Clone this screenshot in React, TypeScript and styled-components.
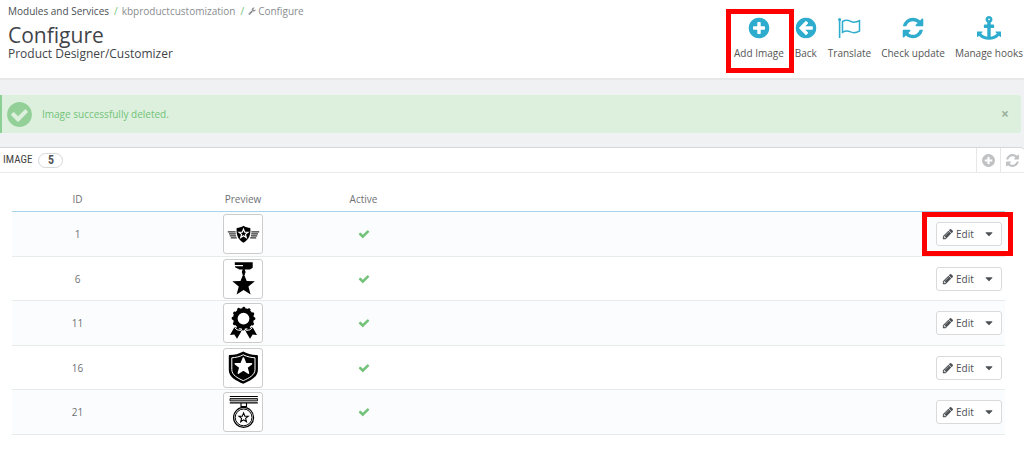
import React from "react";
import styled, { createGlobalStyle } from "styled-components";

const GlobalStyle = createGlobalStyle`
  *, *::before, *::after { box-sizing: border-box; }
  body {
    margin: 0;
    background: #eff1f2;
    color: #555;
    font: 10px/16px "Open Sans", sans-serif;
  }
  button { font: inherit; color: inherit; cursor: pointer; }
  h1, h2, p, ol { margin: 0; padding: 0; }
`;

const DISC =
  "q0 209-103 385.5t-279.5 279.5-385.5 103-385.5-103-279.5-279.5-103-385.5 103-385.5 279.5-279.5 385.5-103 385.5 103 279.5 279.5 103 385.5z";

const glyphs = {
  plusCircle:
    "M1344 960v-128q0-26-19-45t-45-19h-256v-256q0-26-19-45t-45-19h-128q-26 0-45 19t-19 45v256h-256q-26 0-45 19t-19 45v128q0 26 19 45t45 19h256v256q0 26 19 45t45 19h128q26 0 45-19t19-45v-256h256q26 0 45-19t19-45zm320-64" +
    DISC,
  checkCircle:
    "M1412 734q0-28-18-46l-91-90q-19-19-45-19t-45 19l-408 407-226-226q-19-19-45-19t-45 19l-91 90q-18 18-18 46 0 27 18 45l362 362q19 19 45 19 27 0 46-19l543-543q18-18 18-45zm252 162" +
    DISC,
  arrowCircle:
    "M1408 960v-128q0-26-19-45t-45-19h-502l189-189q19-19 19-45t-19-45l-91-91q-18-18-45-18t-45 18l-362 362-91 91q-18 18-18 45t18 45l91 91 362 362q18 18 45 18t45-18l91-91q18-18 18-45t-18-45l-189-189h502q26 0 45-19t19-45zm256-64" +
    DISC,
  refresh:
    "M1639 1056q0 5-1 7-64 268-268 434.5t-478 166.5q-146 0-282.5-55t-243.5-157l-129 129q-19 19-45 19t-45-19-19-45v-448q0-26 19-45t45-19h448q26 0 45 19t19 45-19 45l-137 137q71 66 161 102t187 36q134 0 250-65t186-179q11-17 53-117 8-23 30-23h192q13 0 22.5 9.5t9.5 22.5zm25-800v448q0 26-19 45t-45 19h-448q-26 0-45-19t-19-45 19-45l138-138q-148-137-349-137-134 0-250 65t-186 179q-11 17-53 117-8 23-30 23h-199q-13 0-22.5-9.5t-9.5-22.5v-7q65-268 270-434.5t480-166.5q146 0 284 55.5t245 156.5l130-129q19-19 45-19t45 19 19 45z",
  anchor:
    "M960 256q0-26-19-45t-45-19-45 19-19 45 19 45 45 19 45-19 19-45zm832 928v352q0 22-20 30-8 2-12 2-13 0-23-9l-93-93q-119 143-318.5 226.5t-429.5 83.5-429.5-83.5-318.5-226.5l-93 93q-9 9-23 9-4 0-12-2-20-8-20-30v-352q0-14 9-23t23-9h352q22 0 30 20 8 19-7 35l-100 100q67 91 189.5 153.5t271.5 82.5v-647h-192q-26 0-45-19t-19-45v-128q0-26 19-45t45-19h192v-163q-58-34-93-92.5t-35-128.5q0-106 75-181t181-75 181 75 75 181q0 70-35 128.5t-93 92.5v163h192q26 0 45 19t19 45v128q0 26-19 45t-45 19h-192v647q149-20 271.5-82.5t189.5-153.5l-100-100q-15-16-7-35 8-20 30-20h352q14 0 23 9t9 23z",
  check:
    "M1671 566q0 40-28 68l-724 724-136 136q-28 28-68 28t-68-28l-136-136-362-362q-28-28-28-68t28-68l136-136q28-28 68-28t68 28l294 295 656-657q28-28 68-28t68 28l136 136q28 28 28 68z",
  pencil:
    "M491 1536l91-91-235-235-91 91v107h128v128h107zm523-928q0-22-22-22-10 0-17 7l-542 542q-7 7-7 17 0 22 22 22 10 0 17-7l542-542q7-7 7-17zm-54-192l416 416-832 832h-416v-416zm683 96q0 53-37 90l-166 166-416-416 166-165q36-38 90-38 53 0 91 38l235 234q37 39 37 91z",
  wrench:
    "M448 1472q0-26-19-45t-45-19-45 19-19 45 19 45 45 19 45-19 19-45zm644-420l-682 682q-37 37-90 37-52 0-91-37l-106-108q-38-36-38-90 0-53 38-91l681-681q39 98 114.5 173.5t173.5 114.5zm634-435q0 39-23 106-47 134-164.5 217.5t-258.5 83.5q-185 0-316.5-131.5t-131.5-316.5 131.5-316.5 316.5-131.5q58 0 121.5 16.5t107.5 46.5q16 11 16 28t-16 28l-293 169v224l193 107q5-3 79-48.5t135.5-81 70.5-35.5q15 0 23.5 10t8.5 25z",
  caret: "M1408 704q0 26-19 45l-448 448q-19 19-45 19t-45-19l-448-448q-19-19-19-45t19-45 45-19h896q26 0 45 19t19 45z",
};

type GlyphName = keyof typeof glyphs;

const Svg = styled.svg`
  display: block;
  flex: none;
`;

function Glyph({ name, size }: { name: GlyphName; size: number }) {
  return (
    <Svg width={size} height={size} viewBox="0 0 1792 1792" fill="currentColor" aria-hidden="true">
      <path d={glyphs[name]} />
    </Svg>
  );
}

function FlagIcon() {
  return (
    <Svg width="24" height="24" viewBox="0 0 24 24" fill="none" stroke="currentColor" aria-hidden="true">
      <circle cx="2.600" cy="3.600" r="1.500" fill="currentColor" stroke="none" />
      <path d="M2.600 4v18" strokeWidth="1.600" />
      <path d="M5.500 5.500c3-1.700 5.500-1.500 8.200-.1 2.500 1.300 5 1.200 8.800-.6v10.300c-3.600 1.900-6.300 2-8.900.8-2.600-1.300-5.200-1.300-8.100.4z" strokeWidth="1.500" />
    </Svg>
  );
}

const Page = styled.div`
  display: flex;
  flex-direction: column;
  min-height: 100vh;
`;

const Header = styled.header`
  display: flex;
  justify-content: space-between;
  align-items: flex-start;
  height: 80px;
  padding: 3px 1px 0 8px;
  background: #fff;
  border-bottom: 2px solid #e6e7e8;
`;

const Breadcrumb = styled.ol`
  display: flex;
  list-style: none;
  color: #8a8d90;
`;

const Crumb = styled.li`
  display: flex;
  align-items: center;
  gap: 2px;
  & + &::before {
    content: "/";
    margin: 0 2px 0 5px;
    color: #72c279;
  }
`;

const CrumbLink = styled.a<{ $strong?: boolean }>`
  color: ${(p) => (p.$strong ? "#4b4f54" : "inherit")};
  text-decoration: none;
`;

const Title = styled.h1`
  margin-top: 4px;
  font-size: 21px;
  line-height: 25px;
  font-weight: 400;
  color: #414549;
`;

const Subtitle = styled.h2`
  font-size: 12px;
  line-height: 12px;
  font-weight: 400;
  color: #414549;
`;

const Toolbar = styled.nav`
  display: flex;
  gap: 10px;
  padding-top: 13px;
`;

const Tool = styled.button`
  position: relative;
  display: flex;
  flex-direction: column;
  align-items: center;
  gap: 5px;
  padding: 0;
  border: 0;
  background: none;
  white-space: nowrap;
  svg { color: #2eacce; }
`;

const Highlight = styled.span<{ $inset: string }>`
  position: absolute;
  z-index: 1;
  inset: ${(p) => p.$inset};
  border: 5px solid #fe0000;
  pointer-events: none;
`;

const Alert = styled.div`
  display: flex;
  align-items: center;
  gap: 8px;
  height: 38px;
  margin: 15px 3px 14px 0;
  padding: 0 12px 0 3px;
  background: #dcf0dd;
  border-left: 2px solid #8bcf95;
  border-radius: 0 3px 3px 0;
  color: #72c279;
  svg { color: #92d097; }
`;

const AlertText = styled.p`
  flex: 1;
`;

const Close = styled.button`
  padding: 0;
  border: 0;
  background: none;
  color: #9db09e;
  font-size: 14px;
  font-weight: 700;
`;

const Panel = styled.section`
  flex: 1;
  background: #fff;
  border-top: 1px solid #d3d8db;
  border-radius: 0 4px 0 0;
`;

const PanelHeader = styled.div`
  display: flex;
  align-items: center;
  gap: 6px;
  height: 25px;
  padding-left: 3px;
  border-bottom: 1px solid #e9eaeb;
`;

const PanelTitle = styled.h2`
  font: 400 11px/16px "Ubuntu Condensed", "Liberation Sans Narrow", "Roboto Condensed", sans-serif;
  color: #444;
  text-transform: uppercase;
`;

const Count = styled.span`
  width: 25px;
  height: 15px;
  border: 1px solid #d5d8da;
  border-radius: 8px;
  font: 700 12px/13px "Ubuntu Condensed", "Liberation Sans Narrow", "Roboto Condensed", sans-serif;
  text-align: center;
`;

const PanelActions = styled.div`
  display: flex;
  align-self: stretch;
  margin-left: auto;
`;

const PanelAction = styled.button`
  display: grid;
  place-items: center;
  width: 24px;
  padding: 0;
  border: 0;
  border-left: 1px solid #e6e7e8;
  background: none;
  color: #bfc1c2;
`;

const TableWrap = styled.div`
  padding: 12px 19px 19px 12px;
`;

const Table = styled.table`
  width: 100%;
  table-layout: fixed;
  border-collapse: separate;
  border-spacing: 0;
  color: #6f7275;
`;

const Head = styled.th<{ $width?: number }>`
  width: ${(p) => (p.$width ? `${p.$width}px` : "auto")};
  height: 27px;
  padding: 2px 0 0;
  border-bottom: 1px solid #a5d5ea;
  font-weight: 400;
  text-align: center;
`;

const Row = styled.tr`
  height: 44px;
  &:nth-child(odd) { height: 45px; background: #fbfcfd; }
`;

const Cell = styled.td`
  padding: 0;
  border-bottom: 1px solid #e6ebec;
  text-align: center;
  vertical-align: middle;
  > svg { margin: 0 auto; color: #72c279; }
`;

const Thumb = styled.div`
  display: grid;
  place-items: center;
  width: 40px;
  height: 40px;
  margin: 0 auto;
  border: 1px solid #ccc;
  border-radius: 3px;
  background: #fff;
  color: #000;
`;

const ActionCell = styled(Cell)`
  padding-right: 3px;
`;

const ButtonGroup = styled.div`
  position: relative;
  display: flex;
  width: 66px;
  height: 24px;
  margin-left: auto;
  border: 1px solid #d8dadb;
  border-radius: 3px;
  background: #fff;
  color: #4d5155;
`;

const EditButton = styled.button`
  display: flex;
  align-items: center;
  gap: 2px;
  width: 40px;
  padding: 0 0 0 5px;
  border: 0;
  background: none;
`;

const MoreButton = styled.button`
  display: grid;
  place-items: center;
  flex: 1;
  padding: 0;
  border: 0;
  background: none;
`;

const STAR = "M0-10 2.700-3.300 9.800-3 4.200 1.500 6.100 8.400 0 4.500-6.100 8.400-4.200 1.500-9.800-3-2.700-3.300z";

function Badge({ children }: { children: React.ReactNode }) {
  return (
    <Svg width="38" height="38" viewBox="0 0 38 38" fill="currentColor" aria-hidden="true">
      {children}
    </Svg>
  );
}

function WingedShield() {
  return (
    <Badge>
      <path d="M19.500 10.800c2 1.400 4.300 2 6.800 2.200.7 6.600-1.300 11.700-6.800 14.800-5.500-3.100-7.500-8.200-6.800-14.800 2.500-.2 4.800-.8 6.800-2.200z" />
      <path d={STAR} transform="translate(19.500 18.700) scale(.46)" fill="none" stroke="#fff" strokeWidth="2.600" />
      <path
        d="M3.800 16.800h7.800M5 18.800h6.800M5.800 20.800h6.300M6.800 22.800h6M35.200 16.800h-7.800M34 18.800h-6.800M33.200 20.800h-6.300M32.200 22.800h-6"
        fill="none"
        stroke="#333"
        strokeWidth="1.300"
      />
    </Badge>
  );
}

function HangingStar() {
  return (
    <Badge>
      <path d="M10.800 2.300H28.700V7.800L26 9.500H15.500L11 7.300V6.300H19V4.900H10.800z" />
      <path d="M19.700 9v6" stroke="currentColor" strokeWidth="2.200" />
      <circle cx="19.700" cy="12" r="1.900" />
      <path d={STAR} transform="translate(19.600 24.800) scale(1.150)" />
    </Badge>
  );
}

function Rosette() {
  return (
    <Badge>
      <path d="M10.500 23 6 31l4.300-.5 2.700 4.300 5-8.500zM28.500 23 33 31l-4.300-.5-2.700 4.300-5-8.500z" />
      <circle cx="19.500" cy="14.600" r="8.200" fill="none" stroke="currentColor" strokeWidth="4.600" />
      <circle cx="19.500" cy="14.600" r="10.400" fill="none" stroke="currentColor" strokeWidth="3" strokeDasharray="0.100 5.345" strokeLinecap="round" />
      <path d="M10.500 23.600q2.300 3.100 5.800 2.800 1.400 1.500 3.200 1.500t3.200-1.500q3.500.3 5.800-2.800" fill="none" stroke="#fff" strokeWidth="1" />
    </Badge>
  );
}

function StarShield() {
  return (
    <Badge>
      <path d="M19.300 2.500c4.500 2.600 8.800 3.300 13.800 3.500q.8.100.8 1V21c0 7-7.500 10.800-14.600 13.800C12.200 31.800 4.800 28 4.800 21V7q0-.9.800-1c5-.2 9.200-.9 13.700-3.500z" />
      <path
        d="M19.300 5.800C15.200 7.900 11.700 8.500 7.800 8.800V20.500c0 5.500 5.500 8.400 11.500 11.200C25.300 28.900 31 26 31 20.500V8.800c-4-.3-7.600-.9-11.700-3z"
        fill="none"
        stroke="#fff"
        strokeWidth="1"
      />
      <path d={STAR} transform="translate(19.400 17.200) scale(.82)" fill="#fff" stroke="#fff" strokeWidth="2" strokeLinejoin="round" />
    </Badge>
  );
}

function BarMedal() {
  return (
    <Badge>
      <g fill="none" stroke="currentColor">
        <path d="M5.800 3.500h28M5.800 9.900h28" strokeWidth="1.100" />
        <path d="M6 6.700h27.500" strokeWidth="2.400" stroke="#999" />
        <path d="M6 5.500h27.500v2.400H6z" strokeWidth=".8" />
        <path d="M17 10v4M22.500 10v4M16.500 13.600h6.500" strokeWidth="1.100" />
        <circle cx="19.600" cy="24.400" r="10" strokeWidth="1.200" />
        <circle cx="19.600" cy="24.400" r="8.400" strokeWidth="1" />
        <path d={STAR} transform="translate(19.600 24.700) scale(.48)" strokeWidth="2.200" />
      </g>
    </Badge>
  );
}

const tools = [
  { label: "Add Image", icon: <Glyph name="plusCircle" size={24} />, highlighted: true },
  { label: "Back", icon: <Glyph name="arrowCircle" size={24} /> },
  { label: "Translate", icon: <FlagIcon /> },
  { label: "Check update", icon: <Glyph name="refresh" size={24} /> },
  { label: "Manage hooks", icon: <Glyph name="anchor" size={24} /> },
];

const images = [
  { id: 1, art: <WingedShield />, highlighted: true },
  { id: 6, art: <HangingStar /> },
  { id: 11, art: <Rosette /> },
  { id: 16, art: <StarShield /> },
  { id: 21, art: <BarMedal /> },
];

export default function App() {
  return (
    <Page>
      <GlobalStyle />
      <Header>
        <div>
          <Breadcrumb>
            <Crumb><CrumbLink href="#modules" $strong>Modules and Services</CrumbLink></Crumb>
            <Crumb><CrumbLink href="#module">kbproductcustomization</CrumbLink></Crumb>
            <Crumb>
              <Glyph name="wrench" size={8} />
              <CrumbLink href="#configure">Configure</CrumbLink>
            </Crumb>
          </Breadcrumb>
          <Title>Configure</Title>
          <Subtitle>Product Designer/Customizer</Subtitle>
        </div>
        <Toolbar>
          {tools.map((tool) => (
            <Tool key={tool.label} type="button">
              {tool.icon}
              {tool.label}
              {tool.highlighted && <Highlight $inset="-7px -10px -12px -8px" />}
            </Tool>
          ))}
        </Toolbar>
      </Header>

      <Alert role="status">
        <Glyph name="checkCircle" size={29} />
        <AlertText>Image successfully deleted.</AlertText>
        <Close type="button" aria-label="Close">×</Close>
      </Alert>

      <Panel>
        <PanelHeader>
          <PanelTitle>Image</PanelTitle>
          <Count>5</Count>
          <PanelActions>
            <PanelAction type="button" aria-label="Add new"><Glyph name="plusCircle" size={15} /></PanelAction>
            <PanelAction type="button" aria-label="Refresh list"><Glyph name="refresh" size={15} /></PanelAction>
          </PanelActions>
        </PanelHeader>
        <TableWrap>
          <Table>
            <thead>
              <tr>
                <Head $width={131}>ID</Head>
                <Head $width={200}>Preview</Head>
                <Head $width={41}>Active</Head>
                <Head aria-label="Actions" />
              </tr>
            </thead>
            <tbody>
              {images.map((image) => (
                <Row key={image.id}>
                  <Cell>{image.id}</Cell>
                  <Cell><Thumb>{image.art}</Thumb></Cell>
                  <Cell><Glyph name="check" size={12} /></Cell>
                  <ActionCell>
                    <ButtonGroup>
                      <EditButton type="button">
                        <Glyph name="pencil" size={12} />
                        Edit
                      </EditButton>
                      <MoreButton type="button" aria-label="More actions"><Glyph name="caret" size={12} /></MoreButton>
                      {image.highlighted && <Highlight $inset="-11px -12px -11px -15px" />}
                    </ButtonGroup>
                  </ActionCell>
                </Row>
              ))}
            </tbody>
          </Table>
        </TableWrap>
      </Panel>
    </Page>
  );
}
